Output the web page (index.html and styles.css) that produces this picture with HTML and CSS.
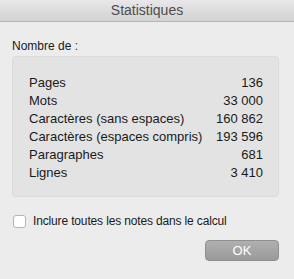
FILE: index.html
```html
<!DOCTYPE html>
<html lang="fr">
<head>
    <meta charset="UTF-8">
    <meta name="viewport" content="width=device-width, initial-scale=1.0">
    <title>Statistiques</title>
    <link rel="stylesheet" href="styles.css">
</head>
<body>
    <div class="titlebar">Statistiques</div>
    <div class="content">
        <div class="heading">Nombre de :</div>
        <div class="panel">
            <div class="row"><span>Pages</span><span>136</span></div>
            <div class="row"><span>Mots</span><span>33 000</span></div>
            <div class="row"><span>Caractères (sans espaces)</span><span>160 862</span></div>
            <div class="row"><span>Caractères (espaces compris)</span><span>193 596</span></div>
            <div class="row"><span>Paragraphes</span><span>681</span></div>
            <div class="row"><span>Lignes</span><span>3 410</span></div>
        </div>
        <label class="check"><span class="box"></span>Inclure toutes les notes dans le calcul</label>
        <div class="actions">
            <button type="button" class="ok">OK</button>
        </div>
    </div>
</body>
</html>
```
FILE: styles.css
```css
body { margin: 0; background: #ececec; font-family: "Liberation Sans", Arial, sans-serif; font-size: 12px; color: #1a1a1a; }
.titlebar { height: 21px; line-height: 21px; text-align: center; font-size: 14px; color: #4d4d4d; background: linear-gradient(#e9e7e9, #d2d2d2); border-bottom: 1px solid #b5b5b5; }
.content { padding: 16px 15px 0 12px; }
.heading { line-height: 16px; margin-bottom: 2px; }
.panel { background: #e3e3e3; border: 1px solid #dbdbdb; border-radius: 4px; padding: 17px 15px 14px 16px; font-size: 13px; }
.row { display: flex; justify-content: space-between; height: 18px; line-height: 18px; }
.check { display: flex; align-items: center; height: 16px; margin-top: 16px; margin-left: 1px; letter-spacing: -0.15px; }
.box { width: 11px; height: 11px; border: 1px solid #b4b4b4; border-radius: 3px; background: #fff; margin-right: 7px; }
.actions { display: flex; justify-content: flex-end; margin-top: 11px; }
.ok { width: 74px; height: 21px; border: 1px solid #8f8f8f; border-radius: 4px; background: linear-gradient(#b0b0b0, #9a9a9a); color: #fff; font-family: inherit; font-size: 13px; padding: 0; }
```
